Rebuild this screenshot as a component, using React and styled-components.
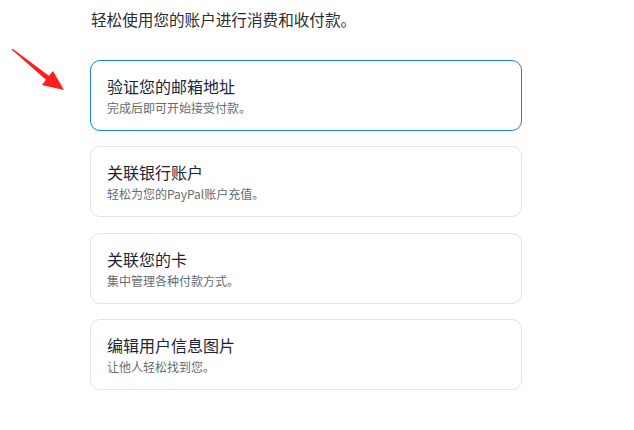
import styled, { createGlobalStyle } from 'styled-components';

const GlobalStyle = createGlobalStyle`
  body {
    margin: 0;
    background: #ffffff;
    font-family: "Noto Sans CJK SC", "Noto Sans", sans-serif;
  }
`;

const steps = [
  { title: '验证您的邮箱地址', text: '完成后即可开始接受付款。', active: true },
  { title: '关联银行账户', text: '轻松为您的PayPal账户充值。' },
  { title: '关联您的卡', text: '集中管理各种付款方式。' },
  { title: '编辑用户信息图片', text: '让他人轻松找到您。' },
];

export default function App() {
  return (
    <>
      <GlobalStyle />
      <Page>
        <Pointer viewBox="0 0 70 50" width="70" height="50">
          <polygon points="11,9 13,9 48.9,35.8 53,31 64,50 42,45 45.9,39.8" fill="#ff1f1f" />
        </Pointer>
        <Intro>轻松使用您的账户进行消费和收付款。</Intro>
        <List>
          {steps.map((step) => (
            <Card key={step.title} active={step.active}>
              <CardTitle>{step.title}</CardTitle>
              <CardText>{step.text}</CardText>
            </Card>
          ))}
        </List>
      </Page>
    </>
  );
}

const Page = styled.div`
  position: relative;
  width: 634px;
  height: 430px;
  padding: 9px 0 0 90px;
  box-sizing: border-box;
`;

const Pointer = styled.svg`
  position: absolute;
  left: 0;
  top: 40px;
`;

const Intro = styled.div`
  color: #2c2e2f;
  font-size: 15.6px;
  line-height: 20px;
  padding-left: 1px;
`;

const List = styled.div`
  display: flex;
  flex-direction: column;
  gap: 15.3px;
  margin-top: 31px;
  width: 432px;
`;

const Card = styled.div`
  display: flex;
  flex-direction: column;
  gap: 4px;
  height: 71px;
  box-sizing: border-box;
  padding: 15px 16px 0;
  border-radius: 10px;
  border: 1px solid ${({ active }) => (active ? '#1a7ee6' : '#e3e3e3')};
`;

const CardTitle = styled.div`
  color: #1b2436;
  font-size: 16px;
  line-height: 20px;
`;

const CardText = styled.div`
  color: #666a70;
  font-size: 12px;
  line-height: 16px;
`;
